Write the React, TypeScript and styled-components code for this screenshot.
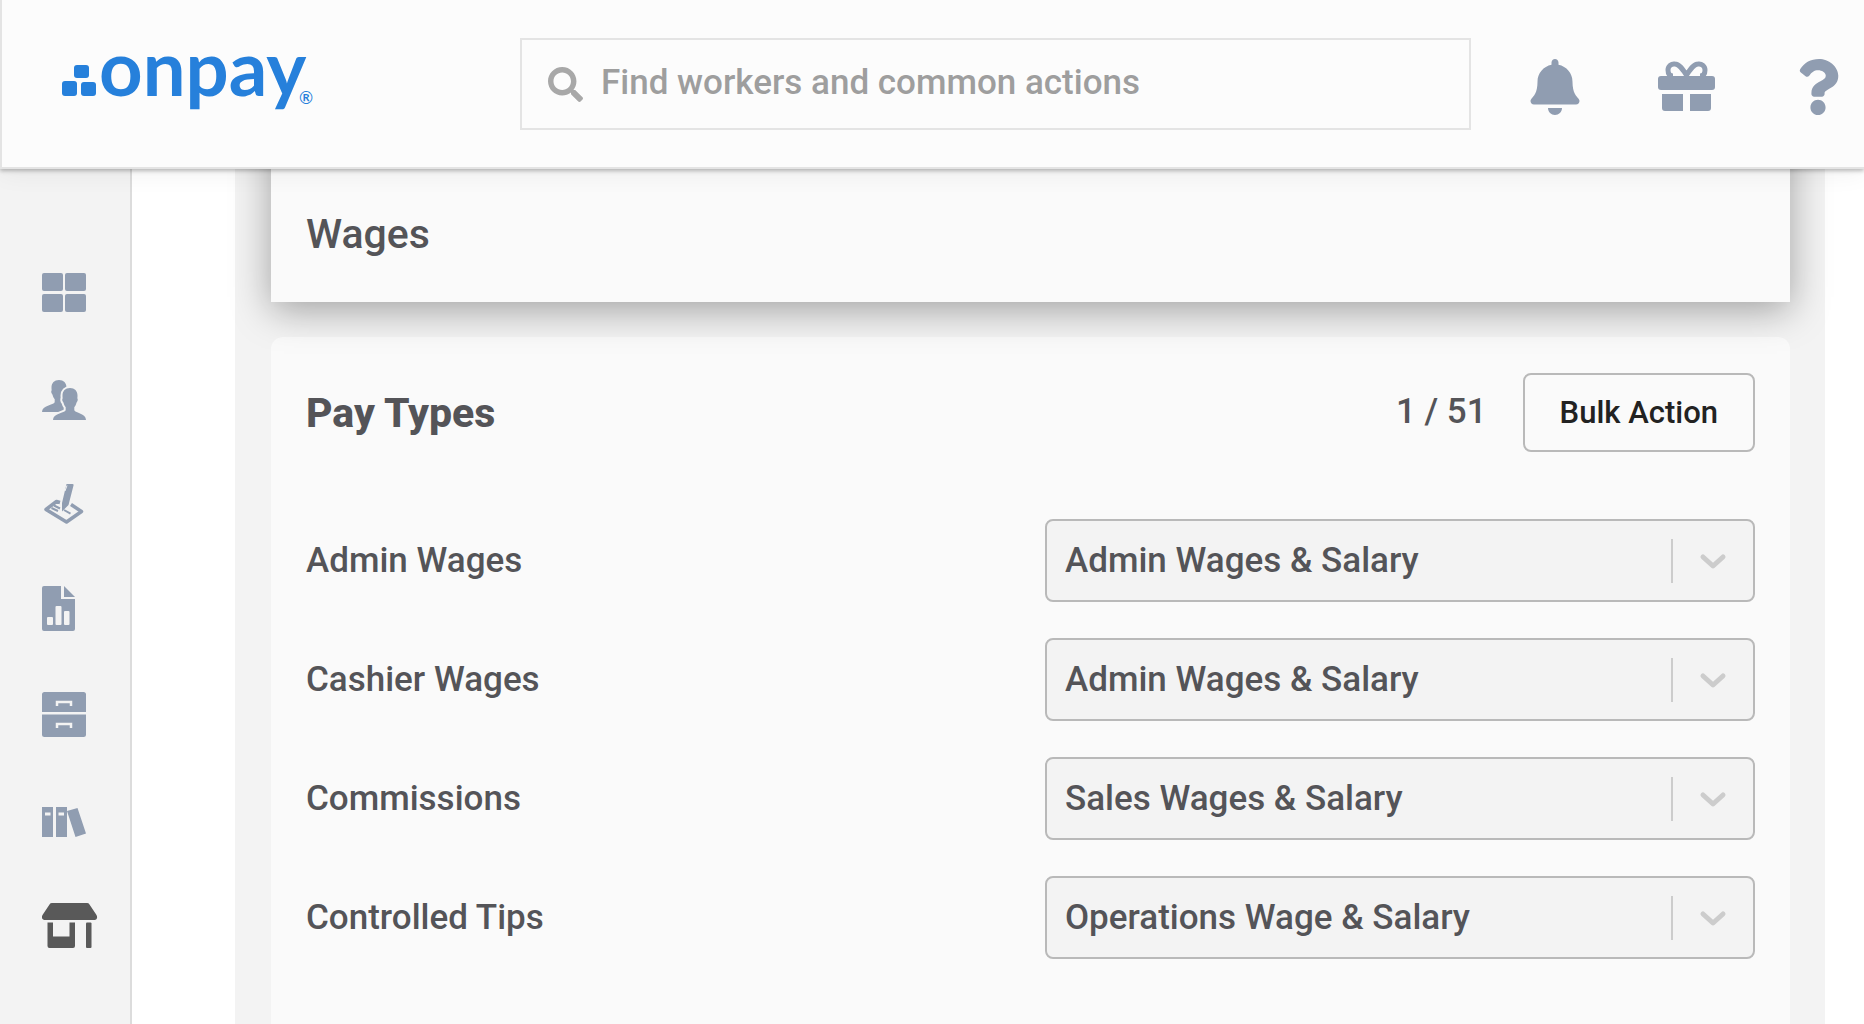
import React from "react";
import styled, { createGlobalStyle } from "styled-components";
import { FaBell, FaQuestion, FaSearch } from "react-icons/fa";

const color = {
  text: "#545458",
  icon: "#909db1",
  active: "#595959",
  brand: "#2680db",
  line: "#b9b9b9",
  soft: "#e4e4e4",
  surface: "#fafafa",
  panel: "#f3f3f3",
};

const GlobalStyle = createGlobalStyle`
  *, *::before, *::after { box-sizing: border-box; }
  body {
    margin: 0;
    background: #fff;
    color: ${color.text};
    font-family: Roboto, "Liberation Sans", sans-serif;
    font-size: 35px;
    font-weight: 500;
  }
`;

const Page = styled.div`
  display: flex;
  flex-direction: column;
  height: 100vh;
  overflow: hidden;
`;

const Header = styled.header`
  z-index: 2;
  flex: none;
  display: flex;
  align-items: center;
  padding: 38px 18px 37px 60px;
  background: #fcfcfc;
  border-left: 2px solid ${color.soft};
  border-bottom: 2px solid ${color.soft};
  box-shadow: 0 2px 4px rgba(0, 0, 0, 0.26), 0 4px 24px rgba(0, 0, 0, 0.06);
`;

const LogoLink = styled.a`
  flex: none;
  display: flex;
  width: 458px;
  margin: -20px 0;
  color: ${color.brand};
`;

const LogoArt = styled.svg`
  width: 280px;
  height: 132px;
  font-family: Lato, sans-serif;
`;

const Search = styled.label`
  flex: 1;
  display: flex;
  align-items: center;
  gap: 18px;
  height: 92px;
  padding: 0 26px;
  border: 2px solid ${color.soft};
  color: #a8a8a8;

  svg { flex: none; }
`;

const SearchInput = styled.input`
  flex: 1;
  min-width: 0;
  padding: 0 0 3px;
  border: 0;
  outline: 0;
  background: transparent;
  color: ${color.text};
  font: inherit;

  &::placeholder { color: #9e9e9e; opacity: 1; }
`;

const HeaderActions = styled.div`
  flex: none;
  display: flex;
  align-items: center;
  gap: 75px;
  padding-left: 56px;
`;

const IconButton = styled.button`
  display: flex;
  padding: 6px 0 0;
  border: 0;
  background: none;
  color: ${color.icon};

  svg {
    width: auto;
    height: 56px;
  }
`;

const Body = styled.div`
  flex: 1;
  min-height: 0;
  display: flex;
`;

const Sidebar = styled.nav`
  flex: none;
  width: 132px;
  padding: 70px 0 0 42px;
  background: ${color.panel};
  border-right: 2px solid #dcdcdc;
`;

const NavLink = styled.a<{ $active?: boolean }>`
  display: flex;
  align-items: center;
  height: 106px;
  color: ${(p) => (p.$active ? color.active : color.icon)};
`;

const NavIcon = styled.svg`
  width: 56px;
  height: 56px;
`;

const Main = styled.main`
  flex: 1;
  min-width: 0;
  display: flex;
  padding: 0 39px 0 103px;
`;

const Panel = styled.div`
  flex: 1;
  min-width: 0;
  display: flex;
  flex-direction: column;
  gap: 35px;
  padding: 0 35px 0 36px;
  background: ${color.panel};
`;

const StickyCard = styled.section`
  z-index: 1;
  flex: none;
  margin-top: -80px;
  padding: 120px 35px 43px;
  background: ${color.surface};
  box-shadow: 0 8px 36px rgba(0, 0, 0, 0.34);
`;

const Title = styled.h1`
  margin: 0;
  font-size: 41px;
  font-weight: 500;
  line-height: 50px;
`;

const Card = styled.section`
  flex: 1;
  padding: 36px 35px;
  background: ${color.surface};
  border-radius: 12px 12px 0 0;
`;

const CardHeader = styled.div`
  display: flex;
  align-items: center;
  margin-bottom: 67px;
`;

const CardTitle = styled.h2`
  flex: 1;
  margin: 0;
  font-size: 41px;
  font-weight: 800;
`;

const Counter = styled.span`
  padding: 0 36px 3px 0;
`;

const BulkButton = styled.button`
  height: 79px;
  padding: 0 35px;
  border: 2px solid ${color.line};
  border-radius: 8px;
  background: ${color.surface};
  color: #222;
  font: inherit;
  font-size: 31px;
`;

const Rows = styled.div`
  display: grid;
  gap: 36px;
`;

const Row = styled.div`
  display: grid;
  grid-template-columns: minmax(0, 1fr) 49%;
  align-items: center;
`;

const SelectBox = styled.div`
  display: grid;
  align-items: center;

  > * { grid-area: 1 / 1; }
`;

const Select = styled.select`
  appearance: none;
  width: 100%;
  height: 83px;
  padding: 0 96px 0 18px;
  border: 2px solid ${color.line};
  border-radius: 8px;
  background: ${color.panel};
  color: ${color.text};
  font: inherit;
`;

const Indicator = styled.span`
  justify-self: end;
  display: flex;
  align-items: center;
  width: 84px;
  height: 44px;
  padding-left: 26px;
  border-left: 2px solid #ccc;
  color: #ccc;
  pointer-events: none;
`;

function GiftIcon() {
  return (
    <svg width="57" height="56" viewBox="0 0 57 56" fill="currentColor">
      <path
        d="M29 17C24 9 21 5 17 5a6 6 0 0 0-7 6c0 4 2 6 5 6M28 17C33 9 36 5 40 5a6 6 0 0 1 7 6c0 4-2 6-5 6"
        fill="none"
        stroke="currentColor"
        strokeWidth="5"
      />
      <rect x="0" y="17" width="57" height="14" rx="3" />
      <path d="M4 35h21v17H7a3 3 0 0 1-3-3zM32 35h21v14a3 3 0 0 1-3 3H32z" />
    </svg>
  );
}

const bust =
  "M28 18c4.6 0 7.5 3 7.5 7.5 0 1 0 2-.2 2.8.8.6.6 3-.7 4.2-.5 2-1.3 3.6-2.3 4.8v3c1 2.700 11.700 3.300 11.700 9.700H11c0-6.400 11.700-7 12.700-9.700v-3c-1-1.200-1.800-2.800-2.300-4.800-1.300-1.200-1.500-3.600-.7-4.200-.2-.8-.2-1.800-.2-2.800C20.500 21 23.400 18 28 18z";

const navItems: { label: string; active?: boolean; icon: React.ReactNode }[] = [
  {
    label: "Dashboard",
    icon: (
      <>
        <rect x="0" y="9" width="21" height="18" rx="2" />
        <rect x="23" y="9" width="21" height="18" rx="2" />
        <rect x="0" y="30" width="21" height="18" rx="2" />
        <rect x="23" y="30" width="21" height="18" rx="2" />
      </>
    ),
  },
  {
    label: "Workers",
    icon: (
      <>
        <path d={bust} transform="translate(-11 -8)" />
        <path d={bust} stroke={color.panel} strokeWidth="4" />
        <path d={bust} />
        <path d="M0 50h56v6H0z" fill={color.panel} />
      </>
    ),
  },
  {
    label: "Payroll",
    icon: (
      <>
        <path
          d="M18 26.500l-3.500-1L4 33.500 24.500 46 39.500 35.500 29 28.500"
          fill="none"
          stroke="currentColor"
          strokeWidth="3.500"
          strokeLinejoin="round"
        />
        <path
          d="M12 29.500l6 3M9.500 32l6.500 3M22 34l6.500 3.700"
          fill="none"
          stroke="currentColor"
          strokeWidth="2"
        />
        <path d="M24.500 8h6c1 0 1.300.6 1 1.500L26.500 29 20 35.500 20 27z" />
        <path d="M23 15l2-5.500" stroke={color.panel} strokeWidth="1" />
      </>
    ),
  },
  {
    label: "Reports",
    icon: (
      <>
        <path d="M2 4h17v13h14v30a2 2 0 0 1-2 2H2a2 2 0 0 1-2-2V6a2 2 0 0 1 2-2z" />
        <path d="M22 4l11 11H22z" />
        <g fill={color.panel}>
          <rect x="5" y="35" width="6" height="8" rx="1" />
          <rect x="13.500" y="24" width="6" height="19" rx="1" />
          <rect x="22" y="29" width="5.500" height="14" rx="1" />
        </g>
      </>
    ),
  },
  {
    label: "Files",
    icon: (
      <>
        <path d="M2.500 4h39a2.500 2.500 0 0 1 2.500 2.500V24H0V6.500A2.500 2.500 0 0 1 2.500 4zM0 26.500h44v20a2.500 2.500 0 0 1-2.500 2.500h-39A2.500 2.500 0 0 1 0 46.500z" />
        <path
          d="M15 18v-4h14v4M15 40v-4h14v4"
          fill="none"
          stroke={color.panel}
          strokeWidth="2.500"
        />
      </>
    ),
  },
  {
    label: "Library",
    icon: (
      <>
        <path d="M0 13h11v30H0zM14 13h11v30H14zM25 17l10.500-3L44 39.500 33.500 43z" />
        <path d="M3 18.500h5.500v3H3zM16.500 18.500H22v3h-5.500z" fill={color.panel} />
      </>
    ),
  },
  {
    label: "Company",
    active: true,
    icon: (
      <>
        <path d="M10 3h35a3 3 0 0 1 2.500 1.400l7 10.600c1.400 2.500.300 5-2 5h-50c-2.300 0-3.400-2.500-2-5l7-10.600A3 3 0 0 1 10 3z" />
        <path d="M5.500 22.500H11v14h16.500v-14H33V46a2 2 0 0 1-2 2H7.500a2 2 0 0 1-2-2z" />
        <rect x="44" y="22.500" width="5.500" height="25.500" rx="1" />
      </>
    ),
  },
];

const accounts = ["Admin Wages & Salary", "Sales Wages & Salary", "Operations Wage & Salary"];

const payTypes = [
  { id: "admin", label: "Admin Wages", account: accounts[0] },
  { id: "cashier", label: "Cashier Wages", account: accounts[0] },
  { id: "commissions", label: "Commissions", account: accounts[1] },
  { id: "tips", label: "Controlled Tips", account: accounts[2] },
];

export default function App() {
  return (
    <>
      <GlobalStyle />
      <Page>
        <Header>
          <LogoLink href="#">
            <LogoArt viewBox="0 -20 280 132" fill="currentColor">
              <rect x="12" y="27" width="15" height="13" rx="3" />
              <rect x="0" y="43" width="15" height="15" rx="3" />
              <rect x="19" y="44" width="15" height="14" rx="3" />
              <text x="37" y="58" fontSize="76" fontWeight="700">
                onpay
              </text>
              <text x="237" y="66" fontSize="17">
                ®
              </text>
            </LogoArt>
          </LogoLink>
          <Search>
            <FaSearch size={35} aria-hidden="true" />
            <SearchInput
              type="text"
              aria-label="Find workers and common actions"
              placeholder="Find workers and common actions"
            />
          </Search>
          <HeaderActions>
            <IconButton aria-label="Notifications">
              <FaBell />
            </IconButton>
            <IconButton aria-label="Rewards">
              <GiftIcon />
            </IconButton>
            <IconButton aria-label="Help">
              <FaQuestion />
            </IconButton>
          </HeaderActions>
        </Header>
        <Body>
          <Sidebar aria-label="Main">
            {navItems.map((item) => (
              <NavLink key={item.label} href="#" aria-label={item.label} $active={item.active}>
                <NavIcon viewBox="0 0 56 56" fill="currentColor" aria-hidden="true">
                  {item.icon}
                </NavIcon>
              </NavLink>
            ))}
          </Sidebar>
          <Main>
            <Panel>
              <StickyCard>
                <Title>Wages</Title>
              </StickyCard>
              <Card>
                <CardHeader>
                  <CardTitle>Pay Types</CardTitle>
                  <Counter>1 / 51</Counter>
                  <BulkButton type="button">Bulk Action</BulkButton>
                </CardHeader>
                <Rows>
                  {payTypes.map((type) => (
                    <Row key={type.id}>
                      <label htmlFor={type.id}>{type.label}</label>
                      <SelectBox>
                        <Select id={type.id} defaultValue={type.account}>
                          {accounts.map((account) => (
                            <option key={account}>{account}</option>
                          ))}
                        </Select>
                        <Indicator>
                          <svg width="28" height="18" viewBox="0 0 28 18" aria-hidden="true">
                            <path
                              d="M4 5l10 9L24 5"
                              fill="none"
                              stroke="currentColor"
                              strokeWidth="5"
                              strokeLinecap="round"
                              strokeLinejoin="round"
                            />
                          </svg>
                        </Indicator>
                      </SelectBox>
                    </Row>
                  ))}
                </Rows>
              </Card>
            </Panel>
          </Main>
        </Body>
      </Page>
    </>
  );
}
